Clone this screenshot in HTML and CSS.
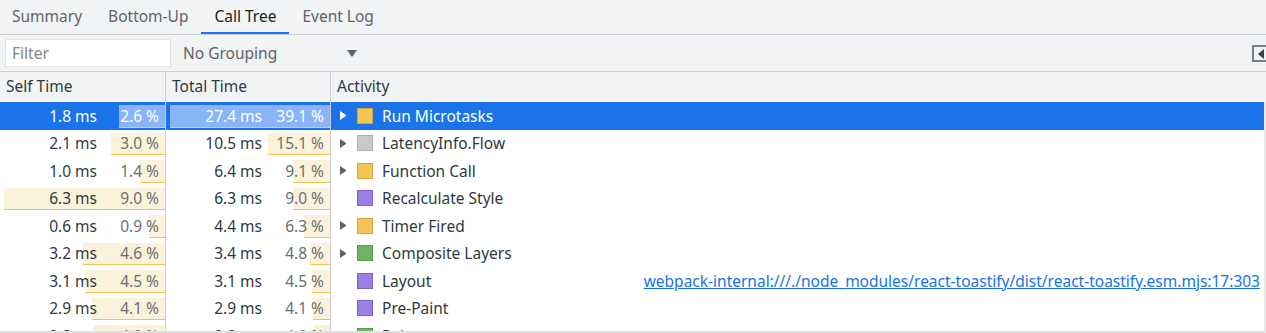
FILE: index.html
```html
<!DOCTYPE html>
<html lang="en">
  <head>
    <meta charset="UTF-8" />
    <title>Call Tree</title>
    <link rel="stylesheet" href="styles.css">
  </head>
  <body>
    <main class="panel">
      <!-- [1] Tabs -->
      <nav class="tabs">
        <span class="tab">Summary</span>
        <span class="tab">Bottom-Up</span>
        <span class="tab active">Call Tree</span>
        <span class="tab">Event Log</span>
      </nav>

      <!-- [2] Toolbar -->
      <div class="toolbar">
        <div class="filter">Filter</div>
        <div class="grouping">
          <span>No Grouping</span>
          <span class="caret"></span>
        </div>
        <span class="sidebar-toggle"></span>
      </div>

      <!-- [3] Tree grid -->
      <div class="grid">
        <div class="grid-head">
          <div class="cell">Self Time</div>
          <div class="cell">Total Time</div>
          <div class="cell">Activity</div>
        </div>
        <div class="grid-body" id="rows"></div>
      </div>
    </main>

    <script>
      (function () {
        const data = [
          { self: 1.8, selfPct: 2.6, total: 27.4, totalPct: 39.1, kids: true, cat: "scripting", name: "Run Microtasks", selected: true },
          { self: 2.1, selfPct: 3.0, total: 10.5, totalPct: 15.1, kids: true, cat: "other", name: "LatencyInfo.Flow" },
          { self: 1.0, selfPct: 1.4, total: 6.4, totalPct: 9.1, kids: true, cat: "scripting", name: "Function Call" },
          { self: 6.3, selfPct: 9.0, total: 6.3, totalPct: 9.0, kids: false, cat: "rendering", name: "Recalculate Style" },
          { self: 0.6, selfPct: 0.9, total: 4.4, totalPct: 6.3, kids: true, cat: "scripting", name: "Timer Fired" },
          { self: 3.2, selfPct: 4.6, total: 3.4, totalPct: 4.8, kids: true, cat: "painting", name: "Composite Layers" },
          { self: 3.1, selfPct: 4.5, total: 3.1, totalPct: 4.5, kids: false, cat: "rendering", name: "Layout", url: "webpack-internal:///./node_modules/react-toastify/dist/react-toastify.esm.mjs:17:303" },
          { self: 2.9, selfPct: 4.1, total: 2.9, totalPct: 4.1, kids: false, cat: "rendering", name: "Pre-Paint" },
          { self: 2.8, selfPct: 4.0, total: 2.8, totalPct: 4.0, kids: false, cat: "painting", name: "Paint" },
        ];

        let maxSelf = 0;
        let maxTotal = 0;
        data.forEach(({ selfPct, totalPct }) => {
          if (selfPct > maxSelf) maxSelf = selfPct;
          if (totalPct > maxTotal) maxTotal = totalPct;
        });

        const timeCell = (ms, pct, max) => `
          <div class="cell time" style="--w: ${((pct / max) * 100).toFixed(2)}%;">
            <span class="ms">${ms.toFixed(1)} ms</span>
            <span class="pct">${pct.toFixed(1)} %</span>
          </div>
        `;

        const row = (d) => `
          <div class="row ${d.selected ? "selected" : ""}">
            ${timeCell(d.self, d.selfPct, maxSelf)}
            ${timeCell(d.total, d.totalPct, maxTotal)}
            <div class="cell activity">
              <span class="toggle ${d.kids ? "has-kids" : ""}"></span>
              <span class="swatch ${d.cat}"></span>
              <span class="name">${d.name}</span>
              ${d.url ? `<a class="link" href="#">${d.url}</a>` : ""}
            </div>
          </div>
        `;

        document.getElementById("rows").innerHTML = data.map(row).join("");
      })();
    </script>
  </body>
</html>
```

FILE: styles.css
```css
/*
  Global styles
*/

* {
  margin: 0;
  padding: 0;
  box-sizing: border-box;
}
:root {
  --bg: #f1f3f4;
  --line: #cbcdd1;
  --blue: #1a73e8;
  --text: #202124;
  --muted: #5f6368;
}
body {
  width: 1266px;
  height: 333px;
  overflow: hidden;
  background-color: var(--bg);
  color: var(--text);
  font-family: "Noto Sans", sans-serif;
  font-size: 15.5px;
}

/*
  Tabs + toolbar
*/

.tabs {
  height: 35px;
  display: flex;
  border-bottom: 1px solid var(--line);
}
.tab {
  padding: 0 13px;
  line-height: 32px;
  color: var(--muted);
  border-bottom: 2px solid transparent;
}
.tab:first-child {
  padding-left: 12px;
}
.tab.active {
  color: var(--text);
  border-bottom-color: var(--blue);
}

.toolbar {
  height: 37px;
  display: flex;
  align-items: center;
  padding-left: 5px;
  border-bottom: 1px solid var(--line);
}
.filter {
  width: 166px;
  height: 28px;
  padding-left: 6px;
  line-height: 27px;
  color: #80868b;
  background-color: #fff;
  border: 1px solid #e3e5e8;
}
.grouping {
  width: 186px;
  display: flex;
  align-items: center;
  justify-content: space-between;
  padding-left: 12px;
  color: var(--muted);
}
.caret {
  width: 0;
  height: 0;
  border-left: 5px solid transparent;
  border-right: 5px solid transparent;
  border-top: 7px solid var(--muted);
  margin-top: 1px;
}
.sidebar-toggle {
  margin-left: auto;
  width: 14px;
  height: 17px;
  margin-top: 1px;
  border: 2px solid #7b7e82;
  border-right: none;
  display: flex;
  align-items: center;
  justify-content: center;
}
.sidebar-toggle::before {
  content: "";
  border-top: 5px solid transparent;
  border-bottom: 5px solid transparent;
  border-right: 6px solid #3c4043;
  margin-left: 2px;
}

/*
  Tree grid
*/

.grid-head,
.row {
  display: grid;
  grid-template-columns: 166px 165px 1fr;
}
.grid-head {
  height: 30px;
  align-items: center;
  color: #303942;
}
.grid-head .cell {
  height: 100%;
  line-height: 29px;
  padding-left: 6px;
  border-right: 1px solid var(--line);
}
.grid-head .cell:last-child {
  border-right: none;
}
.grid-body {
  height: 231px;
  overflow: hidden;
  background-color: #fff;
  border-right: 2px solid #e8e8e8;
  border-bottom: 2px solid #e0e0e0;
}
.row {
  height: 27.5px;
  color: #303942;
}
.row .cell {
  display: flex;
  align-items: center;
  white-space: nowrap;
}

/* time columns with proportional bars */
.time {
  justify-content: flex-end;
  padding-left: 4px;
  border-right: 1px solid var(--line);
  background-origin: content-box;
  background-clip: content-box;
  background-repeat: no-repeat;
  background-image:
    linear-gradient(#f0c350, #f0c350),
    linear-gradient(#fbf2dc, #fbf2dc);
  background-size:
    var(--w) 1px,
    var(--w) calc(100% - 5px);
  background-position:
    right 0 bottom 2px,
    right 0 bottom 2px;
}
.time .ms {
  text-align: right;
}
.time .pct {
  width: 68px;
  padding-right: 6px;
  text-align: right;
  color: #6b6e72;
}

/* activity column */
.activity {
  padding-left: 9px;
  padding-right: 4px;
}
.toggle {
  width: 6px;
  height: 9px;
  margin-right: 11px;
}
.toggle.has-kids {
  border-top: 4.5px solid transparent;
  border-bottom: 4.5px solid transparent;
  border-left: 6px solid var(--muted);
}
.swatch {
  width: 16px;
  height: 16px;
  margin-right: 9px;
  border: 1px solid;
}
.swatch.scripting {
  background-color: #f1c453;
  border-color: #d6a83c;
}
.swatch.other {
  background-color: #c9c9c9;
  border-color: #b0b0b0;
}
.swatch.rendering {
  background-color: #9a7fe4;
  border-color: #7e62c9;
}
.swatch.painting {
  background-color: #71b363;
  border-color: #5a9a4c;
}
.link {
  margin-left: auto;
  color: var(--blue);
}

/* selected row */
.row.selected {
  color: #fff;
  background-color: var(--blue);
}
.row.selected .time {
  background-image:
    linear-gradient(#b8d2fa, #b8d2fa),
    linear-gradient(#8ab4f8, #8ab4f8);
}
.row.selected .pct {
  color: #fff;
}
.row.selected .toggle.has-kids {
  border-left-color: #fff;
}
```
